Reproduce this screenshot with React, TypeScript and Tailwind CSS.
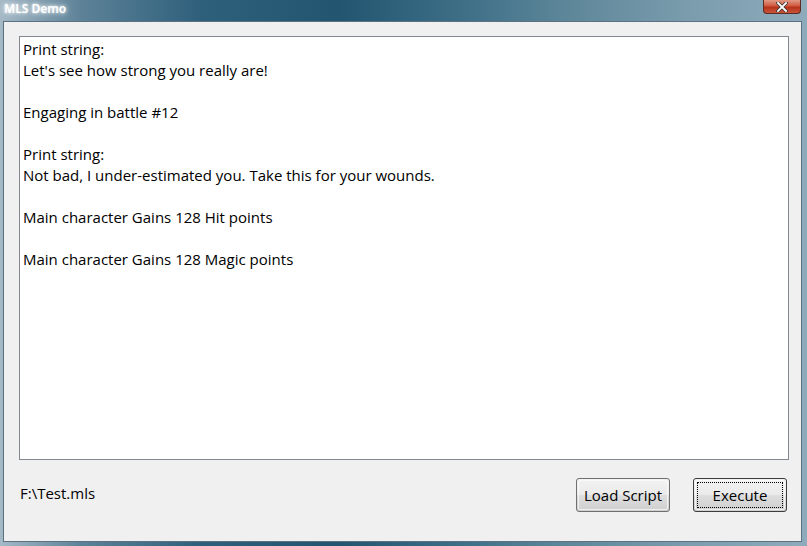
import React from "react";

const lines = [
  "Print string:",
  "Let's see how strong you really are!",
  "",
  "Engaging in battle #12",
  "",
  "Print string:",
  "Not bad, I under-estimated you. Take this for your wounds.",
  "",
  "Main character Gains 128 Hit points",
  "",
  "Main character Gains 128 Magic points",
];

const FONT = "'Open Sans', 'Noto Sans', sans-serif";

function Btn({ label, isDefault }: { label: string; isDefault?: boolean }) {
  return (
    <button
      className={
        "relative w-[94px] h-[34px] rounded-[3px] border text-[15px] text-black leading-none flex items-center justify-center bg-[linear-gradient(180deg,#f2f2f2_0%,#ebebeb_48%,#dddddd_52%,#cfcfcf_100%)] " +
        (isDefault ? "border-[#3c3c3c]" : "border-[#707070]")
      }
      style={{ fontFamily: FONT }}
    >
      <span className="absolute inset-[1px] rounded-[2px] border border-[#fcfcfc]/70 pointer-events-none" />
      {isDefault && (
        <span className="absolute inset-[3px] border border-dotted border-black pointer-events-none" />
      )}
      <span className="relative">{label}</span>
    </button>
  );
}

export default function App() {
  return (
    <div
      className="w-[807px] h-[546px] flex flex-col bg-[linear-gradient(90deg,#a5b9c6_0%,#5d8298_10%,#2e5f7b_25%,#245570_42%,#3f7088_58%,#5d8699_70%,#7a9cad_85%,#8eabbb_100%)] overflow-hidden"
      style={{ fontFamily: FONT }}
    >
      {/* Title bar */}
      <div className="h-[21px] flex items-start justify-between relative shrink-0">
        <div
          className="pl-[4px] pt-[2px] text-[12px] leading-[14px] text-white font-semibold"
          style={{ fontFamily: "'Noto Sans', sans-serif", textShadow: "0 0 6px rgba(255,255,255,0.9), 0 0 3px rgba(255,255,255,0.8)" }}
        >
          MLS Demo
        </div>
        <div className="mr-[6px] w-[38px] h-[14px] rounded-b-[4px] border border-t-0 border-[#5a2b22] bg-[linear-gradient(180deg,#e29a86_0%,#cf5a3e_45%,#b7321a_55%,#c8553a_100%)] flex items-center justify-center">
          <svg width="12" height="10" viewBox="0 0 12 10">
            <path d="M2 1 L10 9 M10 1 L2 9" stroke="#3a3a3a" strokeWidth="3.4" strokeLinecap="square" />
            <path d="M2 1 L10 9 M10 1 L2 9" stroke="#ffffff" strokeWidth="1.8" strokeLinecap="square" />
          </svg>
        </div>
      </div>

      {/* Client area with frame */}
      <div className="flex-1 flex pl-[3px] pr-[5px] pb-[4px]">
        <div className="flex-1 border border-[#5c7282] bg-[#f0f0f0] flex flex-col pl-[15px] pr-[12px] pt-[14px]">
          <div className="h-[424px] border border-[#828790] bg-white pl-[3px] pt-[2px] text-[15px] leading-[21px] text-black">
            {lines.map((l, i) => (
              <div key={i} className="h-[21px] whitespace-pre">
                {l}
              </div>
            ))}
          </div>
          <div className="flex items-center mt-[18px]">
            <div className="pl-[1px] text-[15px] text-black flex-1 pb-[4px]">F:\Test.mls</div>
            <div className="flex gap-[23px] mr-[2px]">
              <Btn label="Load Script" />
              <Btn label="Execute" isDefault />
            </div>
          </div>
        </div>
      </div>
    </div>
  );
}
